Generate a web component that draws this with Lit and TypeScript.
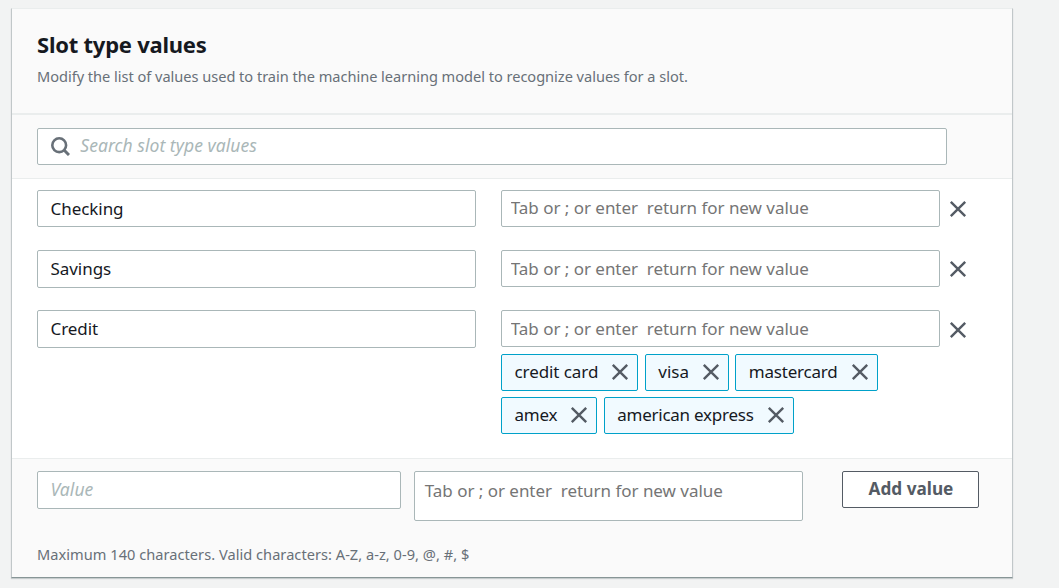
import { LitElement, html, css, svg } from "lit";
import { customElement, state } from "lit/decorators.js";
import { styleMap } from "lit/directives/style-map.js";

interface Synonym { text: string; width: number; spacing: number }
interface SlotValue { name: string; synonyms: Synonym[] }

const HINT = "Tab or ; or enter  return for new value";

const closeIcon = html`<svg width="18" height="18" viewBox="0 0 18 18" fill="none" stroke="#545b64" stroke-width="2.4">
  ${svg`<path d="M1.8 1.8 L16.2 16.2 M16.2 1.8 L1.8 16.2"/>`}</svg>`;

@customElement("app-root")
export class AppRoot extends LitElement {
  static styles = css`
    :host {
      display: block;
      box-sizing: border-box;
      height: 588px;
      overflow: hidden;
      padding: 8px 46px 0 11px;
      background: #f2f3f3;
      font-family: "Noto Sans", sans-serif;
      color: #16191f;
    }
    * { box-sizing: border-box; }
    svg { display: block; flex: none; }
    .panel {
      display: flex;
      flex-direction: column;
      height: 570px;
      background: #fff;
      border: 1px solid #c1c7c9;
      border-top-color: #eaeded;
      border-bottom-color: #879596;
      box-shadow: 0 1px 1px rgba(0, 28, 36, 0.18);
    }
    .head {
      height: 106px;
      padding: 20px 25px 0;
      background: #fafafa;
      border-bottom: 2px solid #eaeded;
    }
    h2 {
      margin: 0;
      font-size: 22px;
      line-height: 30px;
      letter-spacing: -0.24px;
      font-weight: 700;
    }
    .desc, .help {
      margin: 0;
      font-size: 14.6px;
      line-height: 20px;
      color: #687078;
      white-space: nowrap;
    }
    .desc { margin-top: 7px; letter-spacing: -0.03px; }
    .filter {
      height: 64px;
      padding: 13px 65px 0 25px;
      background: #fafafa;
      border-bottom: 1px solid #eaeded;
    }
    .field, input, textarea {
      display: block;
      margin: 0;
      border: 1px solid #aab7b8;
      border-radius: 2px;
      background: #fff;
    }
    input, textarea {
      width: 100%;
      height: 38px;
      padding: 0 13px 2px 12.5px;
      outline: none;
      resize: none;
      overflow: hidden;
      font: 17px "Noto Sans", sans-serif;
      color: #16191f;
    }
    .search {
      display: flex;
      align-items: center;
      gap: 10.5px;
      height: 37px;
      padding-left: 12.75px;
    }
    .search input { border: 0; height: 35px; padding: 0 0 2px; background: none; }
    .italic::placeholder {
      font-size: 17.5px;
      font-style: italic;
      letter-spacing: 0.05px;
      color: #aab7b8;
      opacity: 1;
    }
    .hint { height: 37px; padding: 0 8.75px; }
    .hint::placeholder { color: #757575; opacity: 1; letter-spacing: -0.03px; }
    .rows {
      display: flex;
      flex-direction: column;
      gap: 22px;
      flex: none;
      height: 279px;
      padding: 11px 25px 0;
    }
    .row {
      display: grid;
      grid-template-columns: 439px 439px 18px;
      column-gap: 25px;
      align-items: start;
      min-height: 38px;
    }
    .name { letter-spacing: -0.05px; }
    .row:first-child .name { height: 37px; padding-bottom: 0; }
    .row:first-child .hint { padding-bottom: 2px; }
    .remove {
      margin: 10px 0 0 -16px;
      padding: 0;
      border: 0;
      background: none;
    }
    .row:last-child .remove { margin-top: 11px; }
    .chips { display: flex; flex-wrap: wrap; gap: 6px 6.5px; margin-top: 7px; }
    .chip {
      display: flex;
      align-items: center;
      height: 37px;
      padding: 0 8px 2px 12.5px;
      border: 1px solid #00a1c9;
      border-radius: 2px;
      background: #f1faff;
      font-size: 17px;
      white-space: nowrap;
    }
    .chip svg { margin: 1px 0 0 12.75px; }
    .foot {
      flex: 1;
      padding: 12px 33px 0 25px;
      background: #fafafa;
      border-top: 1px solid #eaeded;
    }
    .add {
      display: grid;
      grid-template-columns: 364px 389px 137px;
      column-gap: 13px;
      align-items: start;
    }
    .area { height: 50px; padding: 7px 9px 0 9.75px; line-height: 24px; }
    .button {
      height: 37px;
      margin-left: 26px;
      width: 137px;
      padding: 0 0 2px 1px;
      border: 1px solid #545b64;
      border-radius: 2px;
      background: #fff;
      color: #545b64;
      font: 700 17.2px "Noto Sans", sans-serif;
      white-space: nowrap;
    }
    .help { margin-top: 23px; letter-spacing: 0.03px; }
  `;

  @state() private values: SlotValue[] = [
    { name: "Checking", synonyms: [] },
    { name: "Savings", synonyms: [] },
    {
      name: "Credit",
      synonyms: [
        { text: "credit card", width: 84, spacing: -0.08 },
        { text: "visa", width: 30.75, spacing: 0 },
        { text: "mastercard", width: 89.75, spacing: -0.2 },
        { text: "amex", width: 43, spacing: -0.2 },
        { text: "american express", width: 136.75, spacing: -0.25 },
      ],
    },
  ];

  private chip(s: Synonym) {
    return html`<div class="chip">
      <span style=${styleMap({ width: `${s.width}px`, letterSpacing: `${s.spacing}px` })}>${s.text}</span>${closeIcon}
    </div>`;
  }

  private row(v: SlotValue) {
    return html`<div class="row">
      <input class="name" .value=${v.name} />
      <div>
        <input class="hint" placeholder=${HINT} />
        ${v.synonyms.length ? html`<div class="chips">${v.synonyms.map((s) => this.chip(s))}</div>` : ""}
      </div>
      <button class="remove" aria-label="Remove">${closeIcon}</button>
    </div>`;
  }

  render() {
    return html`<section class="panel">
      <header class="head">
        <h2>Slot type values</h2>
        <p class="desc">Modify the list of values used to train the machine learning model to recognize values for a slot.</p>
      </header>
      <div class="filter">
        <div class="field search">
          <svg width="19" height="19" viewBox="0 0 19 19" fill="none" stroke="#687078" stroke-width="2.6">
            <circle cx="8.2" cy="8.2" r="6.9" />
            <path d="M13 13 L18 18" stroke-width="3" />
          </svg>
          <input class="italic" placeholder="Search slot type values" />
        </div>
      </div>
      <div class="rows">${this.values.map((v) => this.row(v))}</div>
      <footer class="foot">
        <div class="add">
          <input class="italic" placeholder="Value" />
          <textarea class="area hint" placeholder=${HINT}></textarea>
          <button class="button">Add value</button>
        </div>
        <p class="help">Maximum 140 characters. Valid characters: A-Z, a-z, 0-9, @, #, $</p>
      </footer>
    </section>`;
  }
}
